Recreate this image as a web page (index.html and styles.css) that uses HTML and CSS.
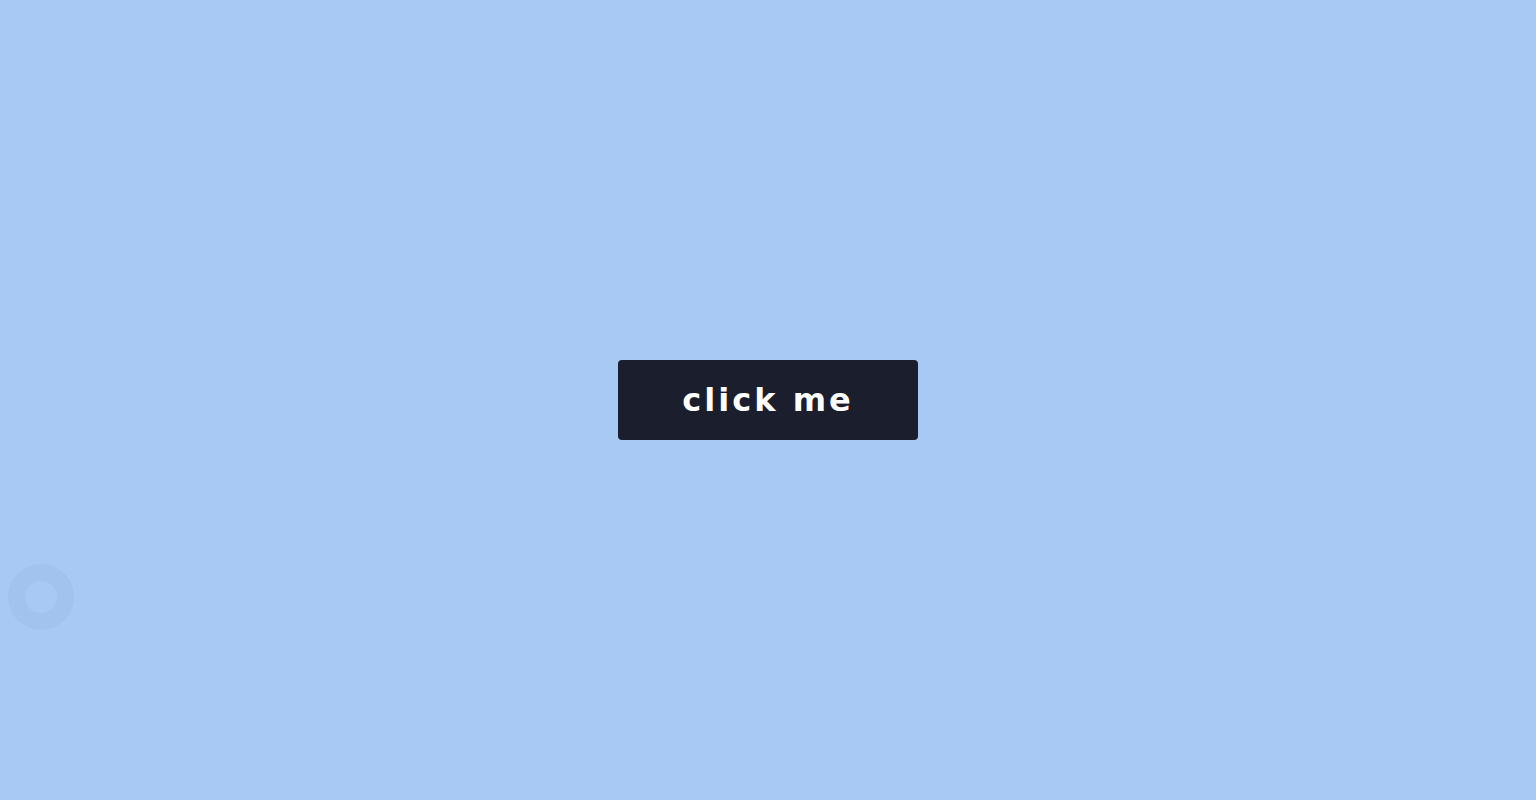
FILE: index.html
```html
<!DOCTYPE html>
<html>
<head>
<meta charset="utf-8">
<link rel="stylesheet" href="styles.css">
</head>
<body>
<main class="stage">
  <button class="btn">click me</button>
</main>
<div class="ring"></div>
</body>
</html>
```

FILE: styles.css
```css
html, body {
  margin: 0;
  padding: 0;
  height: 100%;
}
body {
  background: #a8c9f4;
  font-family: "DejaVu Sans", sans-serif;
}
.stage {
  height: 800px;
  display: flex;
  align-items: center;
  justify-content: center;
}
.btn {
  width: 300px;
  height: 80px;
  border: none;
  border-radius: 4px;
  background: #1b1e2c;
  color: #ffffff;
  font-family: "DejaVu Sans", sans-serif;
  font-weight: bold;
  font-size: 32px;
  letter-spacing: 3px;
  padding: 0;
  cursor: pointer;
}
.ring {
  position: absolute;
  left: 8px;
  top: 564px;
  width: 32px;
  height: 32px;
  border: 17px solid #a2c3ee;
  border-radius: 50%;
}
```
